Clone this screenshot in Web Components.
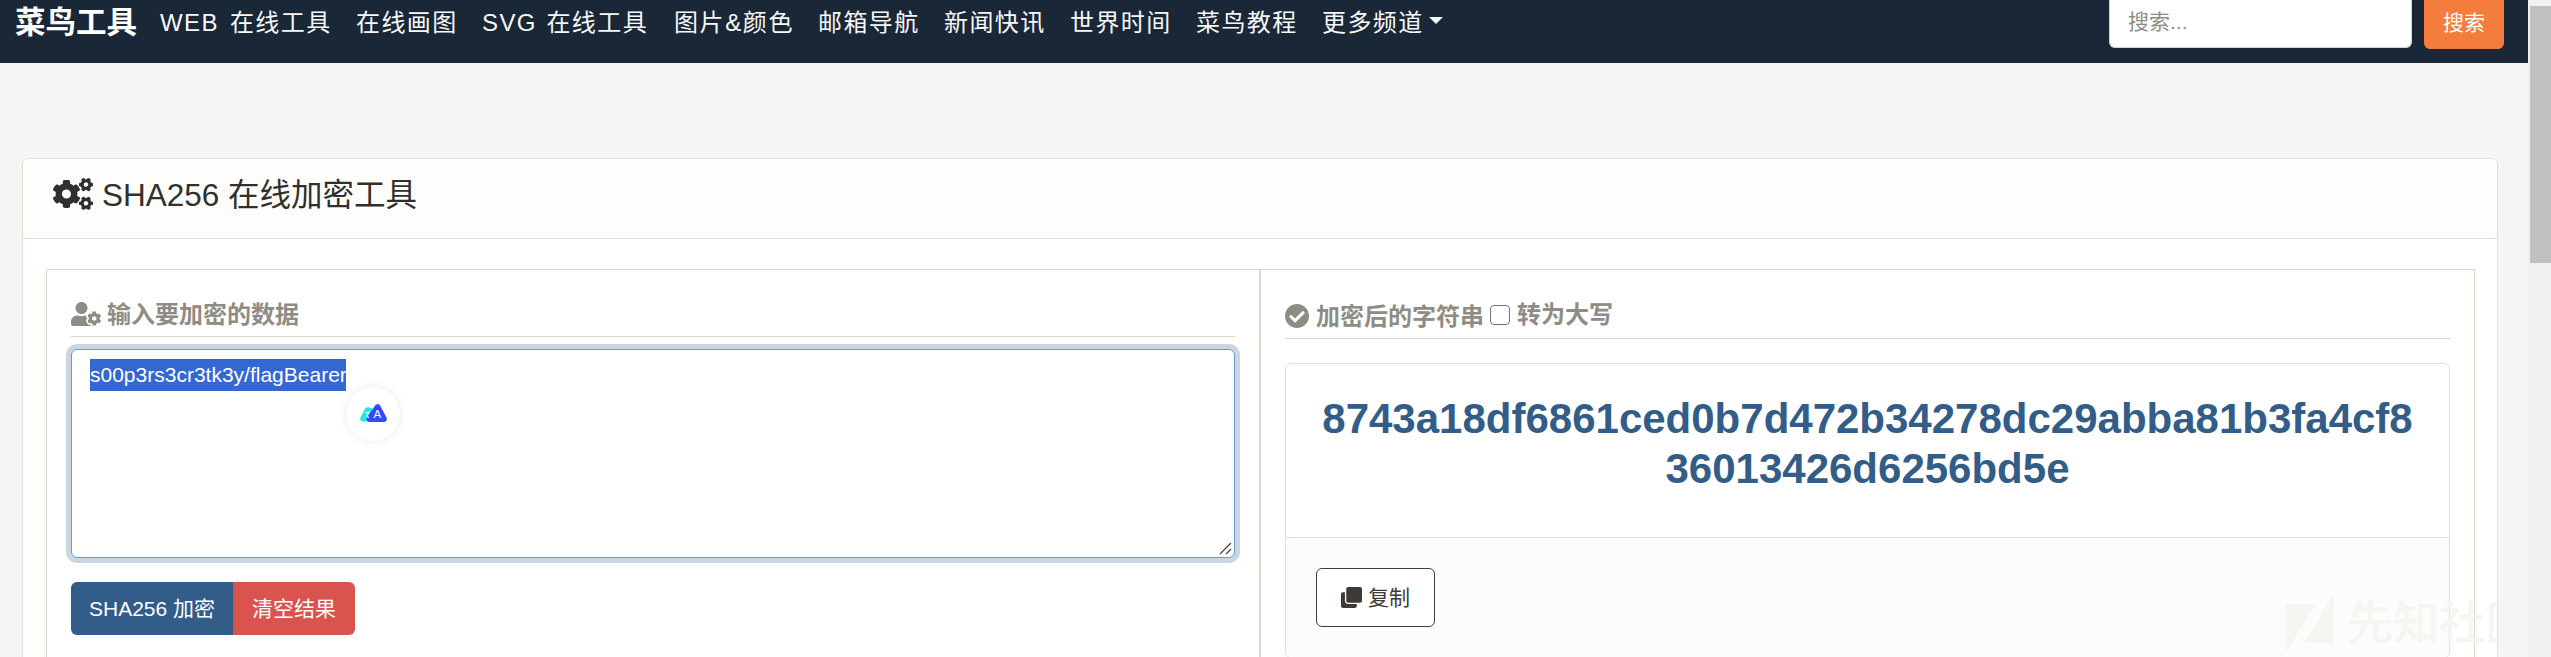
<!DOCTYPE html>
<html lang="zh-CN">
<head>
<meta charset="utf-8">
<title>SHA256 在线加密工具</title>
<style>
html,body{margin:0;height:657px;overflow:hidden}
body{background:#f5f5f5;font:21px/32px "Liberation Sans","Noto Sans CJK SC",sans-serif;color:#3e3f3a}
</style>
</head>
<body>
<tool-page></tool-page>
<script>
const define = (name, markup) => {
  const t = document.createElement('template');
  t.innerHTML = markup;
  customElements.define(name, class extends HTMLElement {
    constructor() {
      super();
      this.attachShadow({ mode: 'open' }).append(t.content.cloneNode(true));
    }
  });
};

const smallGear = 'M512.1 191l-8.2 14.3c-3 5.3-9.4 7.5-15.1 5.4-11.8-4.4-22.6-10.7-32.1-18.6-4.6-3.8-5.8-10.5-2.8-15.7l8.2-14.3c-6.9-8-12.3-17.3-15.9-27.4h-16.5c-6 0-11.2-4.3-12.2-10.3-2-12-2.1-24.6 0-37.1 1-6 6.2-10.4 12.2-10.4h16.5c3.6-10.1 9-19.4 15.9-27.4l-8.2-14.3c-3-5.2-1.9-11.9 2.8-15.7 9.5-7.9 20.4-14.2 32.1-18.6 5.7-2.1 12.1.1 15.1 5.4l8.2 14.3c10.5-1.9 21.2-1.9 31.7 0L552 6.3c3-5.3 9.4-7.5 15.1-5.4 11.8 4.4 22.6 10.7 32.1 18.6 4.6 3.8 5.8 10.5 2.8 15.7l-8.2 14.3c6.9 8 12.3 17.3 15.9 27.4h16.5c6 0 11.2 4.3 12.2 10.3 2 12 2.1 24.6 0 37.1-1 6-6.2 10.4-12.2 10.4h-16.5c-3.6 10.1-9 19.4-15.9 27.4l8.2 14.3c3 5.2 1.9 11.9-2.8 15.7-9.5 7.9-20.4 14.2-32.1 18.6-5.7 2.1-12.1-.1-15.1-5.4l-8.2-14.3c-10.4 1.9-21.2 1.9-31.7 0zm-10.5-58.8c38.5 29.6 82.4-14.3 52.8-52.8-38.5-29.7-82.4 14.3-52.8 52.8z';
const bigGear = 'M386.3 286.1l33.7 16.8c10.1 5.8 14.5 18.1 10.5 29.1-8.9 24.2-26.4 46.4-42.6 65.8-7.4 8.9-20.2 11.1-30.3 5.3l-29.1-16.8c-16 13.7-34.6 24.6-54.9 31.7v33.6c0 11.6-8.3 21.6-19.7 23.6-24.6 4.2-50.4 4.4-75.9 0-11.5-2-20-11.9-20-23.6V418c-20.3-7.2-38.9-18-54.9-31.7L74 403c-10 5.8-22.9 3.6-30.3-5.3-16.2-19.4-33.3-41.6-42.2-65.7-4-10.9.4-23.2 10.5-29.1l33.3-16.8c-3.9-20.9-3.9-42.4 0-63.4L12 205.8c-10.1-5.8-14.6-18.1-10.5-29 8.9-24.2 26-46.4 42.2-65.8 7.4-8.9 20.2-11.1 30.3-5.3l29.1 16.8c16-13.7 34.6-24.6 54.9-31.7V57.1c0-11.5 8.2-21.5 19.6-23.5 24.6-4.2 50.5-4.4 76-.1 11.5 2 20 11.9 20 23.6v33.6c20.3 7.2 38.9 18 54.9 31.7l29.1-16.8c10-5.8 22.9-3.6 30.3 5.3 16.2 19.4 33.2 41.6 42.1 65.8 4 10.9.1 23.2-10 29.1l-33.7 16.8c3.9 21 3.9 42.5 0 63.5zm-117.6 21.1c59.2-77-28.7-164.9-105.7-105.7-59.2 77 28.7 164.9 105.7 105.7z';
const icons = {
  cogs: ['0 0 640 512', `<path d="${smallGear}"/><path d="${bigGear}"/><path transform="translate(0 299)" d="${smallGear}"/>`],
  usercog: ['0 0 640 512', '<path d="M610.5 373.3c2.6-14.1 2.6-28.5 0-42.6l25.8-14.9c3-1.7 4.3-5.2 3.3-8.5-6.7-21.6-18.2-41.2-33.2-57.4-2.3-2.5-6-3.1-9-1.4l-25.8 14.9c-10.9-9.3-23.4-16.5-36.9-21.3v-29.8c0-3.4-2.4-6.4-5.7-7.1-22.3-5-45-4.8-66.2 0-3.3.7-5.7 3.7-5.7 7.1v29.8c-13.5 4.8-26 12-36.9 21.3l-25.8-14.9c-2.9-1.7-6.7-1.1-9 1.4-15 16.2-26.5 35.8-33.2 57.4-1 3.3.4 6.8 3.3 8.5l25.8 14.9c-2.6 14.1-2.6 28.5 0 42.6l-25.8 14.9c-3 1.7-4.3 5.2-3.3 8.5 6.7 21.6 18.2 41.1 33.2 57.4 2.3 2.5 6 3.1 9 1.4l25.8-14.9c10.9 9.3 23.4 16.5 36.9 21.3v29.8c0 3.4 2.4 6.4 5.7 7.1 22.3 5 45 4.8 66.2 0 3.3-.7 5.7-3.7 5.7-7.1v-29.8c13.5-4.8 26-12 36.9-21.3l25.8 14.9c2.9 1.7 6.7 1.1 9-1.4 15-16.2 26.5-35.8 33.2-57.4 1-3.3-.4-6.8-3.3-8.5l-25.8-14.9zM496 400.5c-26.8 0-48.5-21.8-48.5-48.5s21.8-48.5 48.5-48.5 48.5 21.8 48.5 48.5-21.7 48.5-48.5 48.5zM224 256c70.7 0 128-57.3 128-128S294.7 0 224 0 96 57.3 96 128s57.3 128 128 128zm201.2 226.5c-2.3-1.2-4.6-2.6-6.8-3.9l-7.9 4.6c-6 3.4-12.8 5.3-19.6 5.3-10.9 0-21.4-4.6-28.9-12.6-18.3-19.8-32.3-43.9-40.2-69.6-5.5-17.7 1.9-36.4 17.9-45.7l7.9-4.6c-.1-2.6-.1-5.2 0-7.8l-7.9-4.6c-16-9.2-23.4-28-17.9-45.7.9-2.9 2.2-5.8 3.2-8.7-3.8-.3-7.5-1.2-11.4-1.2h-16.7c-22.2 10.2-46.9 16-72.9 16s-50.6-5.8-72.9-16h-16.7C60.2 288 0 348.2 0 422.4V464c0 26.5 21.5 48 48 48h352c10.1 0 19.5-3.2 27.2-8.5-1.2-3.8-2-7.7-2-11.8v-9.2z"/>'],
  check: ['8 8 496 496', '<path d="M504 256c0 136.967-111.033 248-248 248S8 392.967 8 256 119.033 8 256 8s248 111.033 248 248zM227.314 387.314l184-184c6.248-6.248 6.248-16.379 0-22.627l-22.627-22.627c-6.248-6.249-16.379-6.249-22.628 0L216 308.118l-70.059-70.059c-6.248-6.248-16.379-6.248-22.628 0l-22.627 22.627c-6.248 6.248-6.248 16.379 0 22.627l104 104c6.249 6.249 16.379 6.249 22.628.001z"/>'],
  clone: ['0 0 512 512', '<path d="M464 0c26.51 0 48 21.49 48 48v288c0 26.51-21.49 48-48 48H176c-26.51 0-48-21.49-48-48V48c0-26.51 21.49-48 48-48h288M176 416c-44.112 0-80-35.888-80-80V128H48c-26.51 0-48 21.49-48 48v288c0 26.51 21.49 48 48 48h288c26.51 0 48-21.49 48-48v-48H176z"/>']
};
customElements.define('fa-icon', class extends HTMLElement {
  constructor() { super(); this.attachShadow({ mode: 'open' }); }
  connectedCallback() {
    const [box, body] = icons[this.getAttribute('name')];
    this.shadowRoot.innerHTML = `<style>:host{display:block;flex:none}svg{display:block;width:100%;height:100%;fill:currentColor}</style><svg viewBox="${box}">${body}</svg>`;
  }
});

define('nav-link', `<style>
:host{display:block;flex:none;width:126px;font-size:24px;line-height:36px;letter-spacing:1.4px;white-space:pre;color:#f7f8f8}
</style><slot></slot>`);

define('nav-bar', `<style>
:host{display:flex;box-sizing:border-box;height:63px;padding:0 24px 0 15px;background:#192737;align-items:flex-start}
.brand{font-weight:700;font-size:30.5px;line-height:44px;color:#fff;margin-right:23px;width:122px;white-space:nowrap}
.links{display:flex;flex:1;padding-top:5px}
.web{width:196px;word-spacing:3px}
.svg{width:192px;word-spacing:1.5px}
.pic{width:144px;letter-spacing:1.6px}
.more{display:flex;align-items:flex-start}
.caret{width:0;height:0;border:7px solid transparent;border-top-color:#f7f8f8;border-bottom:0;margin:12px 0 0 5px}
.input{box-sizing:border-box;width:303px;height:48px;border:1px solid #ced4da;border-top:0;background:#fff;border-radius:0 0 6px 6px;padding:6px 18px;color:#8e8c84;margin-right:12px}
.btn{box-sizing:border-box;width:80px;height:49px;background:#f47c3c;color:#fff;border-radius:0 0 6px 6px;text-align:center;padding-top:7px}
</style>
<div class="brand">菜鸟工具</div>
<div class="links">
<nav-link class="web">WEB 在线工具</nav-link><nav-link>在线画图</nav-link><nav-link class="svg">SVG 在线工具</nav-link><nav-link class="pic">图片&amp;颜色</nav-link><nav-link>邮箱导航</nav-link><nav-link>新闻快讯</nav-link><nav-link>世界时间</nav-link><nav-link>菜鸟教程</nav-link><nav-link><span class="more">更多频道<span class="caret"></span></span></nav-link>
</div>
<div class="input">搜索...</div><div class="btn">搜索</div>`);

define('scroll-bar', `<style>
:host{display:block;box-sizing:border-box;width:23px;height:657px;background:#f0f0f0;padding:6px 0 0 2px}
div{height:257px;background:#c1c1c1}
</style><div></div>`);

define('tool-card', `<style>
:host{display:block;box-sizing:border-box;border:1px solid #e5e0d6;border-bottom:0;border-radius:6px 6px 0 0;background:#fff;height:520px;overflow:hidden}
header{display:flex;box-sizing:border-box;height:80px;border-bottom:1px solid #e5e0d6;background:#fefdfb;padding:19px 0 0 30px;font-size:31.5px;line-height:34px;color:#2f302d}
fa-icon{width:40px;height:32px;margin-right:9px}
.body{padding:30px 22px 0 23px}
</style>
<header><fa-icon name="cogs"></fa-icon><slot name="title"></slot></header>
<div class="body"><slot></slot></div>`);

define('split-panel', `<style>
:host{display:grid;grid-template-columns:1214px 1215px;box-sizing:border-box;height:420px;box-shadow:0 3px 6px rgba(0,0,0,.05)}
div{box-sizing:border-box;border:1px solid #dfd7ca;border-bottom:0;padding:23px 24px 0;min-width:0}
</style><div><slot name="left"></slot></div><div><slot name="right"></slot></div>`);

define('section-head', `<style>
:host{display:flex;box-sizing:border-box;border-bottom:1px solid #dfd7ca;font-weight:700;font-size:24px;line-height:36px;color:#8e8c84;white-space:nowrap}
</style><slot></slot>`);

define('translate-bubble', `<style>
:host{position:absolute;left:274px;top:37px;width:54px;height:54px;border-radius:50%;background:#fff;box-shadow:0 0 9px rgba(0,0,0,.09);display:flex;align-items:center;justify-content:center}
svg{display:block;width:27px;height:18px;margin-bottom:2px}
</style><svg viewBox="0 0 27 18"><path d="M7.5 6L3 14.8h5L11 7z" fill="#1de9e0" stroke="#1de9e0" stroke-width="5.6" stroke-linejoin="round"/><path d="M17.6 3.2L9.6 15h14.2z" fill="#3149ff" stroke="#3149ff" stroke-width="6" stroke-linejoin="round"/><path d="M5.2 8.8l3.6-.5-2 3.6 2 1.8" fill="none" stroke="#fff" stroke-width="1.2"/><text x="17.4" y="14.4" font-size="11.5" text-anchor="middle" fill="#fff" font-family="Liberation Sans">A</text></svg>`);

define('text-box', `<style>
:host{display:block;position:relative;box-sizing:border-box;height:209px;margin-top:12px;border:1px solid #6a9bc9;border-radius:6px;background:#fff;box-shadow:0 0 0 5px #cbd6e1;padding:9px 18px}
.sel{display:inline-block;background:#3367d1;color:#fff;height:32px;width:256px;white-space:nowrap}
.grip{position:absolute;right:2px;bottom:2px;width:13px;height:13px}
</style><span class="sel"><slot></slot></span><translate-bubble></translate-bubble>
<svg class="grip" viewBox="0 0 13 13" stroke="#4d4d4d" stroke-width="1.4"><path d="M1 12L12 1M7 12l5-5"/></svg>`);

define('action-buttons', `<style>
:host{display:flex;margin-top:24px;height:53px;line-height:53px;color:#fff;white-space:nowrap}
div{text-align:center}
.go{width:162px;background:#325d88;border-radius:6px 0 0 6px}
.clear{width:122px;background:#d9534f;border-radius:0 6px 6px 0}
</style><div class="go">SHA256 加密</div><div class="clear">清空结果</div>`);

define('result-card', `<style>
:host{display:flex;flex-direction:column;box-sizing:border-box;margin-top:24px;border:1px solid #e5e0d6;border-radius:6px;height:295px;background:#fff;overflow:hidden}
.hash{box-sizing:border-box;height:173px;padding:30px 30px 0;text-align:center;font-weight:700;font-size:42px;line-height:50px;color:#325d88;word-break:break-all}
.foot{flex:1;border-top:1px solid #e5e0d6;background:#fdfcfa;padding:30px}
.copy{display:flex;align-items:center;box-sizing:border-box;width:119px;height:59px;border:1px solid #3e3f3a;border-radius:6px;background:#fff;padding-left:24px;color:#3e3a35}
fa-icon{width:21px;height:21px;margin-right:6px}
</style><div class="hash"><slot></slot></div><div class="foot"><div class="copy"><fa-icon name="clone"></fa-icon>复制</div></div>`);

define('water-mark', `<style>
:host{position:absolute;left:2286px;top:592px;width:244px;height:65px;display:flex;overflow:hidden;opacity:.85;color:#f4f5f0;font-size:46px;line-height:62px;font-weight:500;white-space:nowrap}
svg{flex:none;width:48px;height:60px;margin-right:13px;fill:#f4f5f0}
</style><svg viewBox="0 0 48 60"><path d="M0 12h30L0 60zM48 2v49H18z"/></svg><span>先知社区</span>`);

define('tool-page', `<style>
:host{display:grid;grid-template-columns:2528px 23px;height:657px;overflow:hidden;position:relative}
main{background:#f5f5f5}
tool-card{margin:95px 30px 0 22px}
.ic1{width:30px;height:24px;margin:9px 6px 0 0}
.ic2{width:24px;height:24px;margin:11px 7px 0 0}
.label{padding-top:4px}
.enc{padding-top:6px}
.box{box-sizing:border-box;width:20px;height:20px;border:1px solid #6c757d;border-radius:4px;background:#fff;margin:12px 7px 0 6px}
</style>
<main><nav-bar></nav-bar>
<tool-card><span slot="title">SHA256 在线加密工具</span>
<split-panel>
<section slot="left"><section-head style="height:44px"><fa-icon class="ic1" name="usercog"></fa-icon><span class="label">输入要加密的数据</span></section-head>
<text-box>s00p3rs3cr3tk3y/flagBearer</text-box><action-buttons></action-buttons></section>
<section slot="right"><section-head style="height:46px"><fa-icon class="ic2" name="check"></fa-icon><span class="enc">加密后的字符串</span><span class="box"></span><span class="label">转为大写</span></section-head>
<result-card>8743a18df6861ced0b7d472b34278dc29abba81b3fa4cf836013426d6256bd5e</result-card></section>
</split-panel></tool-card></main>
<scroll-bar></scroll-bar><water-mark></water-mark>`);
</script>
</body>
</html>
